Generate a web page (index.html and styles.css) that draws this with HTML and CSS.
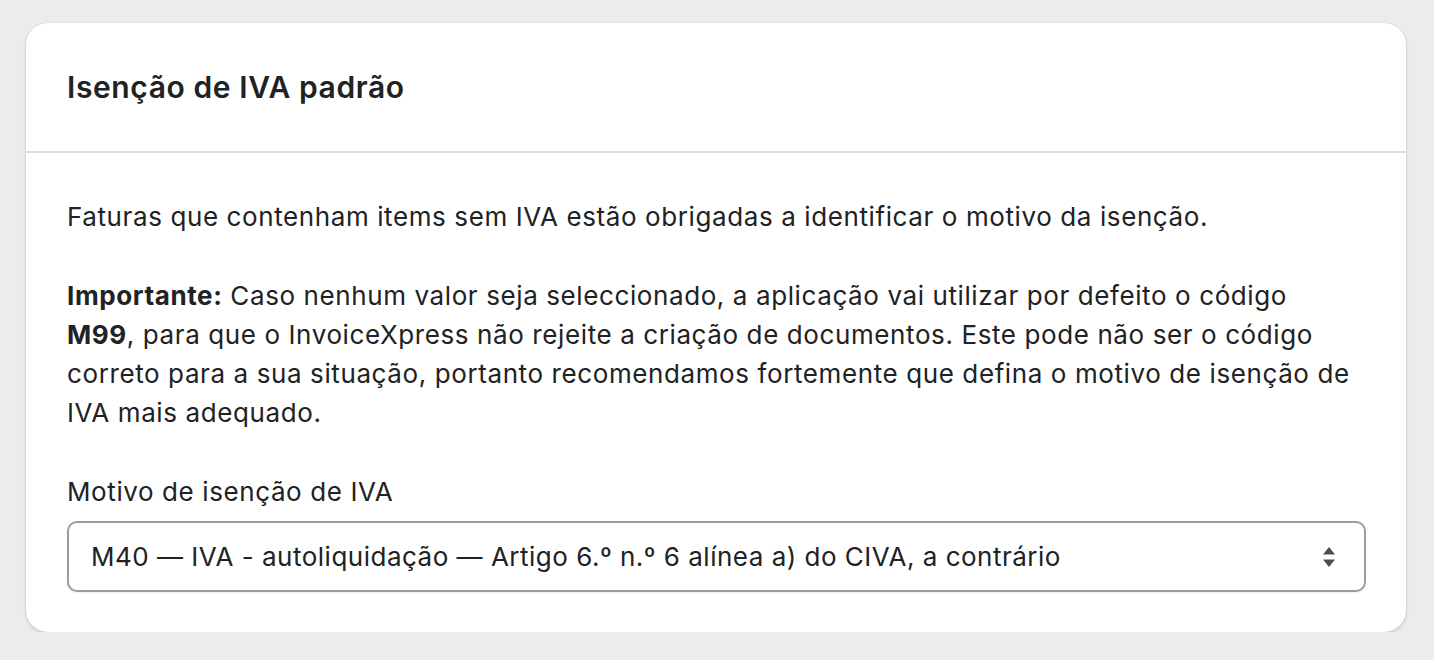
FILE: index.html
```html
<!DOCTYPE html>
<html lang="pt">
<head>
    <meta charset="UTF-8">
    <meta name="viewport" content="width=device-width, initial-scale=1.0">
    <title>Isenção de IVA padrão</title>
    <link rel="stylesheet" href="styles.css">
</head>
<body>
    <div class="card">
        <div class="card-header">
            <h2>Isenção de IVA padrão</h2>
        </div>
        <div class="card-body">
            <p>Faturas que contenham items sem IVA estão obrigadas a identificar o motivo da isenção.</p>
            <p><strong>Importante:</strong> Caso nenhum valor seja seleccionado, a aplicação vai utilizar por defeito o código<br><strong>M99</strong>, para que o InvoiceXpress não rejeite a criação de documentos. Este pode não ser o código correto para a sua situação, portanto recomendamos fortemente que defina o motivo de isenção de IVA mais adequado.</p>

            <label class="field-label" for="exemption">Motivo de isenção de IVA</label>
            <div class="select">
                <span class="select-value">M40 — IVA - autoliquidação — Artigo 6.º n.º 6 alínea a) do CIVA, a contrário</span>
                <svg class="select-arrow" width="14" height="22" viewBox="0 0 14 22">
                    <path d="M7 1 L13 8.5 H1 Z" />
                    <path d="M7 21 L13 13.5 H1 Z" />
                </svg>
            </div>
        </div>
    </div>
</body>
</html>
```

FILE: styles.css
```css
body {
    font-family: Inter, "Liberation Sans", sans-serif;
    background-color: #ebecee;
    color: #202223;
    margin: 0;
    padding: 23px 28px 0 26px;
}

.card {
    background-color: #ffffff;
    border-radius: 22px;
    box-shadow: 0px 2px 4px rgba(0, 0, 0, 0.12), 0px 0px 0px 1px rgba(0, 0, 0, 0.03);
    overflow: hidden;
}

.card-header {
    padding: 40px 41px 40px;
    border-bottom: 2px solid #dcdde1;
}

.card-header h2 {
    margin: 0;
    font-size: 30px;
    line-height: 48px;
    font-weight: 600;
    letter-spacing: 0.6px;
}

.card-body {
    padding: 44px 40px 40px 41px;
    letter-spacing: 0.6px;
}

.card-body p {
    margin: 0 0 40px;
    font-size: 26px;
    line-height: 39px;
}

.card-body strong {
    font-weight: 700;
}

.field-label {
    display: block;
    font-size: 26px;
    line-height: 40px;
    margin-bottom: 9px;
}

.select {
    display: flex;
    align-items: center;
    justify-content: space-between;
    height: 67px;
    padding: 0 28px 0 22px;
    border: 2px solid #999ca3;
    border-radius: 10px;
    box-shadow: 0px 1px 2px rgba(0, 0, 0, 0.08);
}

.select-value {
    font-size: 26px;
    letter-spacing: 0.5px;
}

.select-arrow {
    fill: #4a4f57;
}
```
